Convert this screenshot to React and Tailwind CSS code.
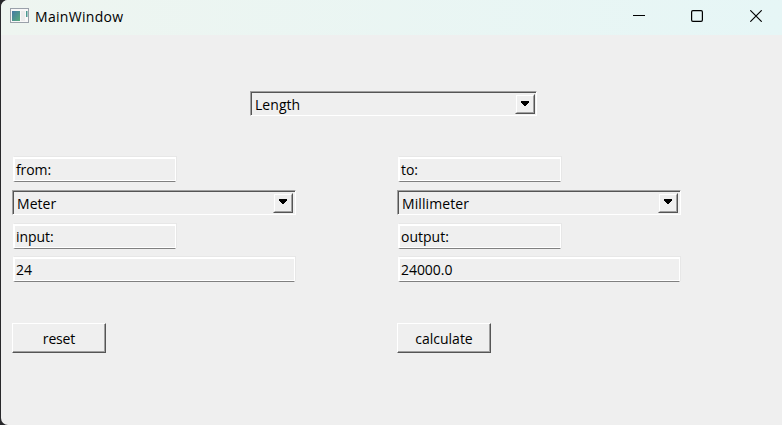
const FONT = "font-['Open_Sans','Noto_Sans',sans-serif] text-[14px] leading-5 text-black whitespace-nowrap";

function Combo({ value, className = "", inset = "pr-[2px]", arrow = "pt-[4px]", tracking }) {
  return (
    <div className={`h-[25px] border border-t-[#a0a0a0] border-l-[#a0a0a0] border-r-white border-b-white ${className}`}>
      <div className={`flex h-full justify-between border-t border-l border-[#555555] pt-px pl-[3px] ${inset}`}>
        <span className={`pt-px ${tracking}`}>{value}</span>
        <div className="h-5 w-5 shrink-0 border border-t-[#efefef] border-l-[#efefef] border-r-[#555555] border-b-[#555555]">
          <div className={`flex h-full justify-center border border-t-white border-l-white border-r-[#a0a0a0] border-b-[#a0a0a0] ${arrow}`}>
            <svg width="8" height="5" viewBox="0 0 8 5" shapeRendering="crispEdges">
              <path d="M0 0h8v2H7v1H6v1H5v1H3V4H2V3H1V2H0z" fill="#000" />
            </svg>
          </div>
        </div>
      </div>
    </div>
  );
}

function Field({ value, className = "", tracking }) {
  return (
    <div className={`ml-px h-[25px] border-t-2 border-r border-b border-l-2 border-t-white border-l-white border-r-white border-b-[#808080] shadow-[1px_-1px_0_#e7e7e7] ${className}`}>
      <div className="h-full border-b border-white pt-px pl-px">
        <span className={`block ${tracking}`}>{value}</span>
      </div>
    </div>
  );
}

function PushButton({ label, tracking }) {
  return (
    <button className="mt-[41px] block h-[30px] w-[94px] border border-t-white border-l-white border-r-[#555555] border-b-[#555555]">
      <span className="flex h-full items-center justify-center border-r border-b border-[#a0a0a0] pt-[3px] pl-px">
        <span className={tracking}>{label}</span>
      </span>
    </button>
  );
}

function Column({ title, unit, caption, amount, action, t }) {
  return (
    <div className="w-[284px]">
      <Field value={title} className="w-[163px]" tracking={t[0]} />
      <Combo value={unit} className="mt-2 w-[284px]" tracking={t[1]} />
      <Field value={caption} className="mt-[9px] w-[163px]" tracking={t[2]} />
      <Field value={amount} className="mt-2 w-[282px]" tracking={t[3]} />
      <PushButton label={action} tracking={t[4]} />
    </div>
  );
}

export default function App() {
  return (
    <div className={`h-[425px] w-[782px] overflow-hidden bg-[#28282b] ${FONT}`}>
      <div className="ml-px h-[425px] overflow-hidden rounded-l-[7px] bg-[#efefef]">
        <header className="flex h-[35px] items-center bg-linear-to-r from-[#eef5f0] to-[#e6f6f6] pb-[3px] pl-[9px]">
          <svg width="19" height="16" viewBox="0 0 19 16">
            <defs>
              <linearGradient id="screen" x1="0" y1="0" x2="1" y2="1">
                <stop offset="0" stopColor="#4679a5" />
                <stop offset="1" stopColor="#58ad7c" />
              </linearGradient>
            </defs>
            <rect x="0.5" y="0.5" width="18" height="14" fill="#f8f8f8" stroke="#9aa1aa" />
            <rect x="2" y="3" width="8" height="10" fill="url(#screen)" />
            <path d="M11 3h4v10h-4z" fill="#ececec" />
            <path d="M16 3h1.5v6H16z" fill="#4d9a91" />
          </svg>
          <span className="ml-[6px] pt-px tracking-[0.3px]">MainWindow</span>
          <div className="mr-[20px] ml-auto flex items-center">
            <svg className="mr-[46px]" width="12" height="12" viewBox="0 0 12 12" fill="none" stroke="#000">
              <path d="M0 5.5h12" />
            </svg>
            <svg className="mr-[47px]" width="12" height="12" viewBox="0 0 12 12" fill="none" stroke="#000" strokeWidth="1.2">
              <rect x="0.6" y="0.6" width="10.8" height="10.8" rx="1.3" />
            </svg>
            <svg width="12" height="12" viewBox="0 0 12 12" fill="none" stroke="#000" strokeWidth="1.15">
              <path d="M0.3 0.3l11.4 11.4M11.7 0.3L0.3 11.7" />
            </svg>
          </div>
        </header>
        <main className="pt-[56px] pl-[11px]">
          <Combo value="Length" className="ml-[238px] w-[287px]" inset="pr-px" arrow="pt-[5px]" tracking="tracking-[0.05px]" />
          <div className="mt-[41px] flex gap-[101px]">
            <Column title="from:" unit="Meter" caption="input:" amount="24" action="reset"
              t={["tracking-[-0.1px]", "tracking-[0.05px]", "tracking-[-0.05px]", "tracking-[-0.1px]", "tracking-[-0.15px]"]} />
            <Column title="to:" unit="Millimeter" caption="output:" amount="24000.0" action="calculate"
              t={["tracking-[-0.1px]", "tracking-[0.1px]", "tracking-[0px]", "tracking-[-0.05px]", "tracking-[0px]"]} />
          </div>
        </main>
      </div>
    </div>
  );
}
